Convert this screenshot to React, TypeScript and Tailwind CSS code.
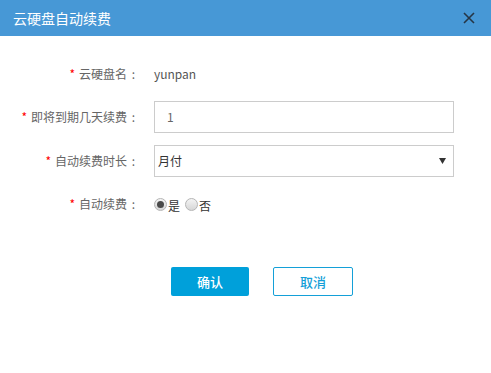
import React from "react";

const font = { fontFamily: '"Noto Sans CJK SC", "Liberation Sans", sans-serif' };

function Label({ text }: { text: string }) {
  return (
    <div className="w-[140px] shrink-0 flex justify-end items-center text-[12px] text-[#666] leading-none whitespace-nowrap">
      <span className="text-[#f00] mr-[4px]">*</span>
      <span>{text}</span>
      <span className="inline-block w-[13px] text-center">:</span>
    </div>
  );
}

function Radio({ checked }: { checked?: boolean }) {
  return (
    <span className="inline-flex w-[13px] h-[13px] rounded-full border border-[#b5b5b5] bg-gradient-to-b from-[#f4f4f4] to-[#d6d6d6] items-center justify-center">
      {checked && <span className="w-[7px] h-[7px] rounded-full bg-[#4a4a4a]" />}
    </span>
  );
}

export default function App() {
  return (
    <div className="w-[491px] h-[373px] bg-white" style={font}>
      <div className="h-[36px] bg-[#4798d6] flex items-center justify-between pl-[13px] pr-[16px]">
        <span className="text-white text-[14px]">云硬盘自动续费</span>
        <svg width="12" height="12" viewBox="0 0 12 12">
          <path d="M1 1 L11 11 M11 1 L1 11" stroke="#263646" strokeWidth="1.6" />
        </svg>
      </div>
      <div className="flex flex-col pt-[22px]">
        <div className="h-[32px] flex items-center">
          <Label text="云硬盘名" />
          <span className="ml-[14px] text-[12px] text-[#555]">yunpan</span>
        </div>
        <div className="h-[32px] flex items-center mt-[11px]">
          <Label text="即将到期几天续费" />
          <div className="ml-[14px] w-[300px] h-[32px] border border-[#ccc] flex items-center pl-[12px] text-[12px] text-[#666]">
            1
          </div>
        </div>
        <div className="h-[32px] flex items-center mt-[12px]">
          <Label text="自动续费时长" />
          <div className="ml-[14px] w-[300px] h-[32px] border border-[#ccc] flex items-center justify-between pl-[3px] pr-[7px] text-[12px] text-[#333]">
            <span>月付</span>
            <svg width="7" height="6" viewBox="0 0 7 6">
              <path d="M0 0 H7 L3.5 6 Z" fill="#333" />
            </svg>
          </div>
        </div>
        <div className="h-[32px] flex items-center mt-[11px]">
          <Label text="自动续费" />
          <div className="ml-[14px] flex items-center text-[12px] text-[#333]">
            <Radio checked />
            <span className="ml-[1px] mt-[3px]">是</span>
            <span className="ml-[5px] inline-flex"><Radio /></span>
            <span className="ml-[1px] mt-[3px]">否</span>
          </div>
        </div>
        <div className="flex mt-[47px] pl-[171px] gap-[24px]">
          <div className="w-[78px] h-[29px] rounded-[2px] bg-[#00a0da] text-white text-[13px] font-medium flex items-center justify-center">
            确认
          </div>
          <div className="w-[80px] h-[29px] rounded-[2px] border border-[#14a0d8] text-[#14a0d8] text-[13px] font-medium flex items-center justify-center">
            取消
          </div>
        </div>
      </div>
    </div>
  );
}
